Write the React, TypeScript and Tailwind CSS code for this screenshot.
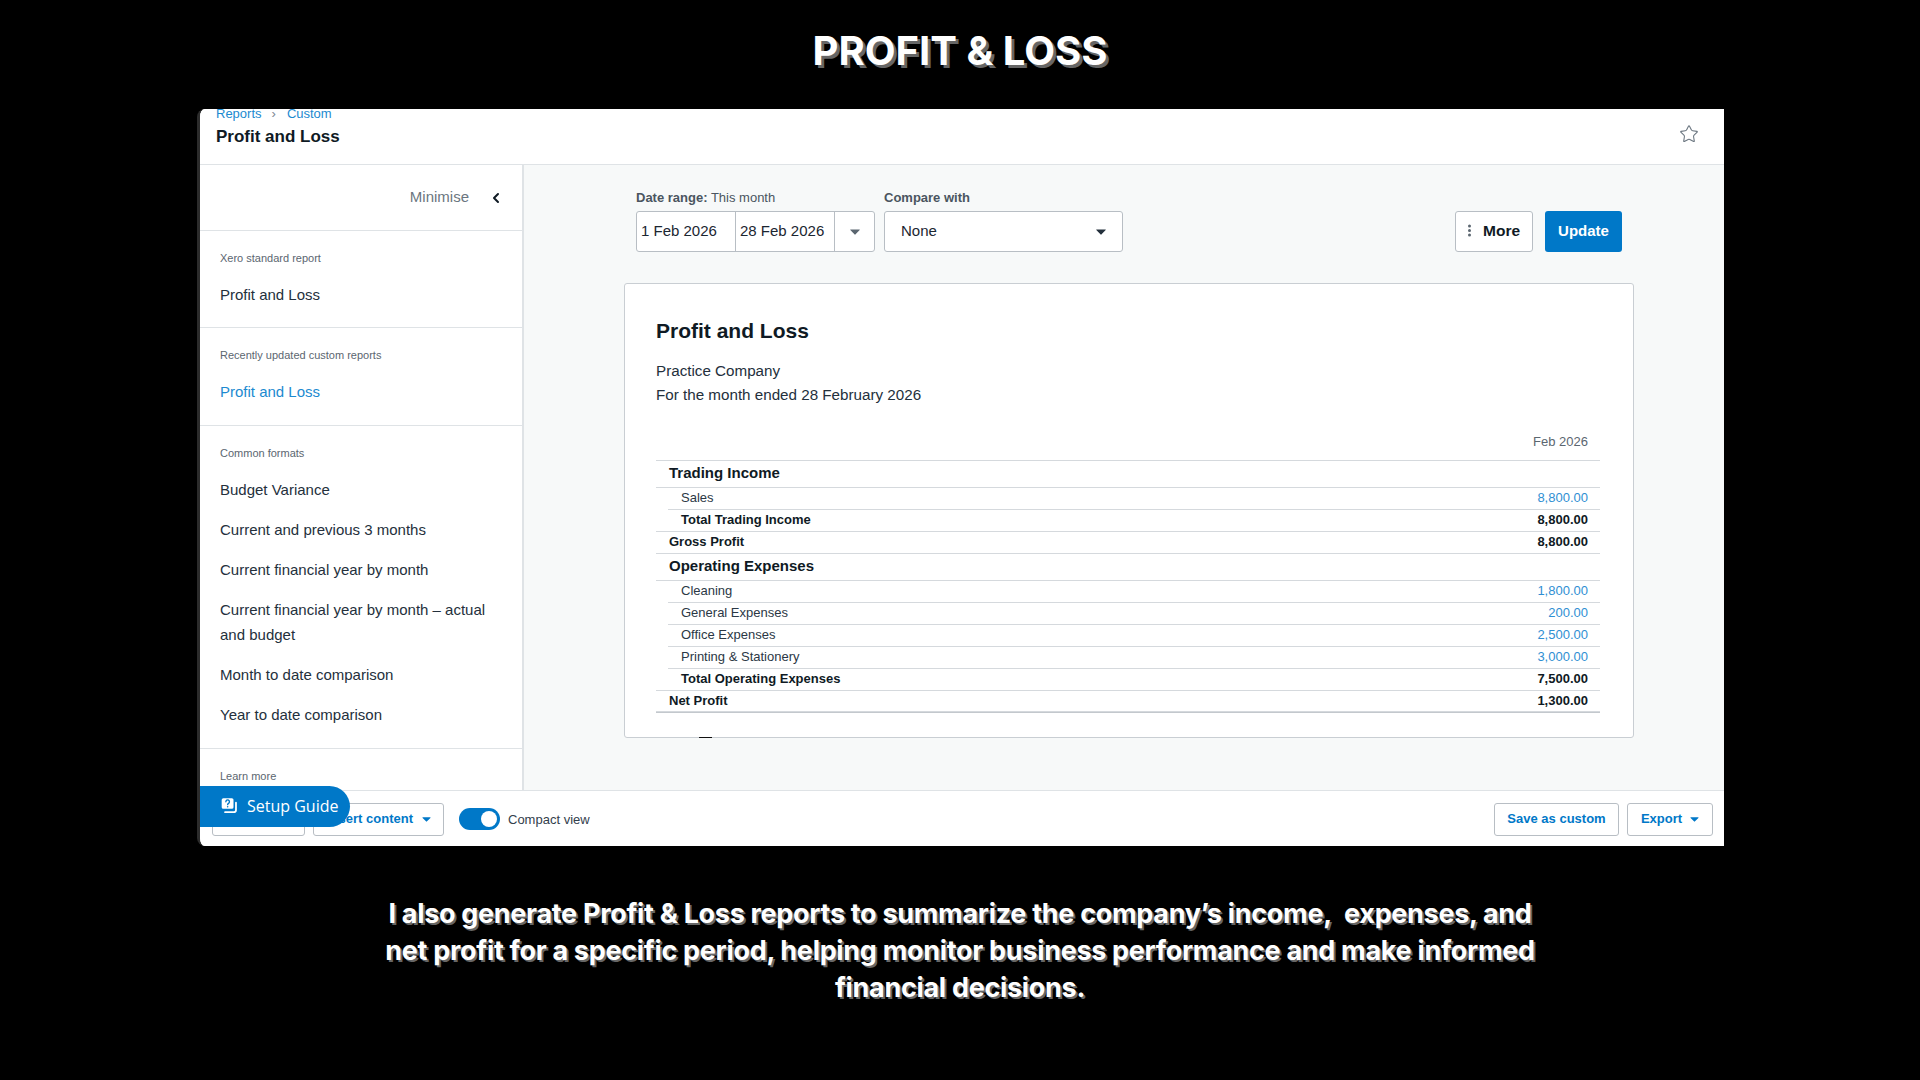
import { ChevronLeft, Star } from "lucide-react";

const caption =
  "I also generate Profit & Loss reports to summarize the company\u2019s income,\u00a0 expenses, and net profit for a specific period, helping monitor business performance and make informed financial decisions.";

type Row = {
  label: string;
  value?: string;
  kind: "section" | "item" | "total" | "summary";
  rowClass: string;
  inset?: boolean;
};

const rows: Row[] = [
  { label: "Trading Income", kind: "section", rowClass: "h-[27px] pb-[2px]" },
  { label: "Sales", value: "8,800.00", kind: "item", rowClass: "h-[22px] pb-[2px]", inset: true },
  { label: "Total Trading Income", value: "8,800.00", kind: "total", rowClass: "h-[22px] pb-[2px]" },
  { label: "Gross Profit", value: "8,800.00", kind: "summary", rowClass: "h-[22px] pb-[2px]" },
  { label: "Operating Expenses", kind: "section", rowClass: "h-[27px] pb-[2px]" },
  { label: "Cleaning", value: "1,800.00", kind: "item", rowClass: "h-[22px] pb-[2px]", inset: true },
  { label: "General Expenses", value: "200.00", kind: "item", rowClass: "h-[22px] pb-[2px]", inset: true },
  { label: "Office Expenses", value: "2,500.00", kind: "item", rowClass: "h-[22px] pb-[2px]", inset: true },
  { label: "Printing & Stationery", value: "3,000.00", kind: "item", rowClass: "h-[22px] pb-[2px]", inset: true },
  { label: "Total Operating Expenses", value: "7,500.00", kind: "total", rowClass: "h-[22px] pb-[2px]" },
  { label: "Net Profit", value: "1,300.00", kind: "summary", rowClass: "h-[21px] pb-[1px]" },
];

const Caret = ({ className }: { className: string }) => (
  <svg viewBox="0 0 10 6" className={className} fill="currentColor">
    <path d="M0.6 0.4h8.8a.4.4 0 0 1 .3.7L5.3 5.5a.4.4 0 0 1-.6 0L.3 1.1a.4.4 0 0 1 .3-.7z" />
  </svg>
);

const ReportRow = ({ row }: { row: Row }) => {
  const labelClass =
    row.kind === "section"
      ? "pl-[13px] text-[15px] font-bold text-[#0f1a24]"
      : row.kind === "item"
        ? "pl-[25px] text-[13px] text-[#2b3845]"
        : row.kind === "total"
          ? "pl-[25px] text-[13px] font-bold text-[#0f1a24]"
          : "pl-[13px] text-[13px] font-bold text-[#0f1a24]";

  return (
    <div className={`relative flex items-center justify-between pr-[12px] ${row.rowClass}`}>
      <span className={labelClass}>{row.label}</span>
      {row.value && (
        <span
          className={
            row.kind === "item"
              ? "text-[13px] text-[#2f8fd3]"
              : "text-[13px] font-bold text-[#0f1a24]"
          }
        >
          {row.value}
        </span>
      )}
      <div
        className={`absolute right-0 bottom-0 h-px bg-[#d5d9dd] ${row.inset ? "left-[12px]" : "left-0"}`}
      />
    </div>
  );
};

const SideLink = ({ children, active }: { children: React.ReactNode; active?: boolean }) => (
  <div className={`text-[15px] leading-[25px] ${active ? "text-[#1c8ad0]" : "text-[#24303c]"}`}>
    {children}
  </div>
);

const SideLabel = ({ children }: { children: React.ReactNode }) => (
  <div className="text-[11px] leading-[14px] text-[#5b6670]">{children}</div>
);

export default function App() {
  return (
    <div className="flex h-[1080px] w-[1920px] flex-col items-center overflow-hidden bg-black font-['Inter',sans-serif]">
      <h1 className="mt-[26px] h-[57px] text-[40px] leading-[50px] font-bold text-white [text-shadow:3px_3px_0_#666]">
        PROFIT &amp; LOSS
      </h1>

      {/* App window */}
      <div className="relative mt-[26px] ml-[197px] flex h-[737px] w-[1527px] flex-col self-start overflow-hidden rounded-l-lg border-l-[3px] border-[#2c2c2c] bg-[#f7f9f9] font-['Liberation_Sans',sans-serif]">
        <div className="relative flex h-[56px] shrink-0 flex-col border-b border-[#dfe3e6] bg-white pl-[16px]">
          <div className="mt-[-3px] flex h-[16px] items-center gap-[10px] text-[13px] text-[#1c8ad0]">
            <span>Reports</span>
            <span className="text-[13px] text-[#7c8791]">&rsaquo;</span>
            <span className="ml-[1px]">Custom</span>
          </div>
          <div className="mt-[3px] text-[17px] leading-[24px] font-bold text-[#0f1a24]">Profit and Loss</div>
          <Star className="absolute top-[15px] right-[25px] h-[20px] w-[20px] text-[#6b7680]" strokeWidth={1.3} />
        </div>

        <div className="flex min-h-0 flex-1">
          {/* Sidebar */}
          <div className="flex w-[324px] shrink-0 flex-col overflow-hidden border-r-2 border-[#dfe3e6] bg-white">
            <div className="flex h-[66px] shrink-0 items-center justify-end gap-[19px] border-b border-[#dfe3e6] pr-[18px]">
              <span className="text-[15px] text-[#6b7680]">Minimise</span>
              <ChevronLeft className="h-[16px] w-[16px] text-[#0f1a24]" strokeWidth={3} />
            </div>
            <div className="h-[97px] shrink-0 border-b border-[#dfe3e6] pt-[20px] pl-[20px]">
              <SideLabel>Xero standard report</SideLabel>
              <div className="mt-[17px]">
                <SideLink>Profit and Loss</SideLink>
              </div>
            </div>
            <div className="h-[98px] shrink-0 border-b border-[#dfe3e6] pt-[20px] pl-[20px]">
              <SideLabel>Recently updated custom reports</SideLabel>
              <div className="mt-[17px]">
                <SideLink active>Profit and Loss</SideLink>
              </div>
            </div>
            <div className="h-[323px] shrink-0 border-b border-[#dfe3e6] pt-[20px] pr-[24px] pl-[20px]">
              <SideLabel>Common formats</SideLabel>
              <div className="mt-[17px] flex flex-col gap-[15px]">
                <SideLink>Budget Variance</SideLink>
                <SideLink>Current and previous 3 months</SideLink>
                <SideLink>Current financial year by month</SideLink>
                <SideLink>Current financial year by month &ndash; actual and budget</SideLink>
                <SideLink>Month to date comparison</SideLink>
                <SideLink>Year to date comparison</SideLink>
              </div>
            </div>
            <div className="pt-[20px] pl-[20px]">
              <SideLabel>Learn more</SideLabel>
            </div>
          </div>

          {/* Report area */}
          <div className="min-w-0 flex-1 pl-[100px]">
            <div className="flex pt-[25px]">
              <div className="ml-[12px]">
                <div className="h-[21px] text-[13px] leading-[16px] text-[#4a5560]">
                  <b>Date range:</b> This month
                </div>
                <div className="flex h-[41px] w-[239px] rounded-[3px] border border-[#b8bec4] bg-white text-[15px] text-[#1b2631]">
                  <div className="flex w-[99px] items-center border-r border-[#b8bec4] pl-[4px]">1 Feb 2026</div>
                  <div className="flex w-[99px] items-center border-r border-[#b8bec4] pl-[4px]">28 Feb 2026</div>
                  <div className="flex flex-1 items-center justify-center">
                    <Caret className="h-[6px] w-[10px] text-[#5b6670]" />
                  </div>
                </div>
              </div>
              <div className="ml-[9px]">
                <div className="h-[21px] text-[13px] leading-[16px] font-bold text-[#4a5560]">Compare with</div>
                <div className="flex h-[41px] w-[239px] items-center justify-between rounded-[3px] border border-[#b8bec4] bg-white pr-[16px] pl-[16px] text-[15px] text-[#1b2631]">
                  None
                  <Caret className="h-[6px] w-[10px] text-[#24303c]" />
                </div>
              </div>
              <div className="ml-[332px] flex items-end gap-[12px]">
                <div className="flex h-[41px] w-[78px] items-center gap-[12px] rounded-[3px] border border-[#b8bec4] bg-white pb-[2px] pl-[12px] text-[15.5px] font-bold text-[#0f1a24]">
                  <svg viewBox="0 0 4 16" className="h-[13px] w-[3px] text-[#5b6670]" fill="currentColor">
                    <circle cx="2" cy="2" r="2" />
                    <circle cx="2" cy="8" r="2" />
                    <circle cx="2" cy="14" r="2" />
                  </svg>
                  More
                </div>
                <div className="flex h-[41px] w-[77px] items-center justify-center rounded-[3px] bg-[#0078c8] text-[15px] font-bold text-white">
                  Update
                </div>
              </div>
            </div>

            {/* Report card */}
            <div className="relative mt-[31px] h-[455px] w-[1010px] rounded-[3px] border border-[#c9ced3] bg-white px-[31px] pt-[33px]">
              <div className="text-[21px] leading-[28px] font-bold text-[#0f1a24]">Profit and Loss</div>
              <div className="mt-[14px] text-[15.2px] leading-[24px] text-[#24303c]">
                <div>Practice Company</div>
                <div>For the month ended 28 February 2026</div>
              </div>
              <div className="mt-[25px] h-[28px] pr-[14px] text-right text-[13px] leading-[20px] text-[#5b6670]">
                Feb 2026
              </div>
              <div className="w-[944px] border-t border-[#d5d9dd]">
                {rows.map((row) => (
                  <ReportRow key={row.label} row={row} />
                ))}
                <div className="h-px bg-[#c3c8cd]" />
              </div>
              <div className="absolute bottom-[-1px] left-[74px] h-px w-[13px] bg-[#111]" />
            </div>
          </div>
        </div>

        {/* Bottom bar */}
        <div className="flex h-[56px] shrink-0 items-center border-t border-[#dfe3e6] bg-white pt-[1px] pr-[11px] pl-[12px]">
          <div className="h-[33px] w-[93px] rounded-[3px] border border-[#b8bec4]" />
          <div className="ml-[8px] flex h-[33px] w-[131px] items-center justify-end gap-[9px] rounded-[3px] border border-[#b8bec4] pr-[12px] text-[13px] font-bold text-[#0078c8]">
            Insert content
            <Caret className="h-[5px] w-[9px]" />
          </div>
          <div className="relative ml-[15px] h-[22px] w-[41px] rounded-full bg-[#0078c8]">
            <div className="absolute top-[3px] right-[3px] h-[16px] w-[16px] rounded-full bg-white" />
          </div>
          <span className="mt-[1px] ml-[8px] text-[13px] text-[#33404c]">Compact view</span>
          <div className="ml-auto flex gap-[8px]">
            <div className="flex h-[33px] w-[125px] items-center justify-center rounded-[3px] border border-[#b8bec4] text-[13px] font-bold text-[#0078c8]">
              Save as custom
            </div>
            <div className="flex h-[33px] w-[86px] items-center justify-center gap-[8px] rounded-[3px] border border-[#b8bec4] text-[13px] font-bold text-[#0078c8]">
              Export
              <Caret className="h-[5px] w-[9px]" />
            </div>
          </div>
        </div>

        {/* Setup guide pill */}
        <div className="absolute bottom-[19px] left-0 flex h-[41px] w-[150px] items-center gap-[9px] rounded-r-full bg-[#0078c8] pb-[2px] pl-[20px] font-['Open_Sans',sans-serif] text-[16px] text-white">
          <svg viewBox="0 0 16 16" className="h-[18px] w-[18px]" fill="none">
            <path d="M3 1h7.5a1.5 1.5 0 0 1 1.5 1.5V9a1.5 1.5 0 0 1-1.5 1.5H3A1.5 1.5 0 0 1 1.5 9V2.5A1.5 1.5 0 0 1 3 1z" fill="white" />
            <path d="M14.2 5v6.5a2 2 0 0 1-2 2H4.5" stroke="white" strokeWidth="1.6" strokeLinecap="round" />
            <path d="M5.2 4.2a1.6 1.6 0 1 1 2.4 1.4c-.5.3-.8.6-.8 1.2" stroke="#0078c8" strokeWidth="1.2" strokeLinecap="round" />
            <circle cx="6.8" cy="8.6" r=".7" fill="#0078c8" />
          </svg>
          Setup Guide
        </div>
      </div>

      <p className="mt-[49px] w-[1180px] text-center text-[27px] leading-[37px] font-bold tracking-[-0.31px] text-white [text-shadow:2px_2px_0_#666]">
        {caption}
      </p>
    </div>
  );
}
